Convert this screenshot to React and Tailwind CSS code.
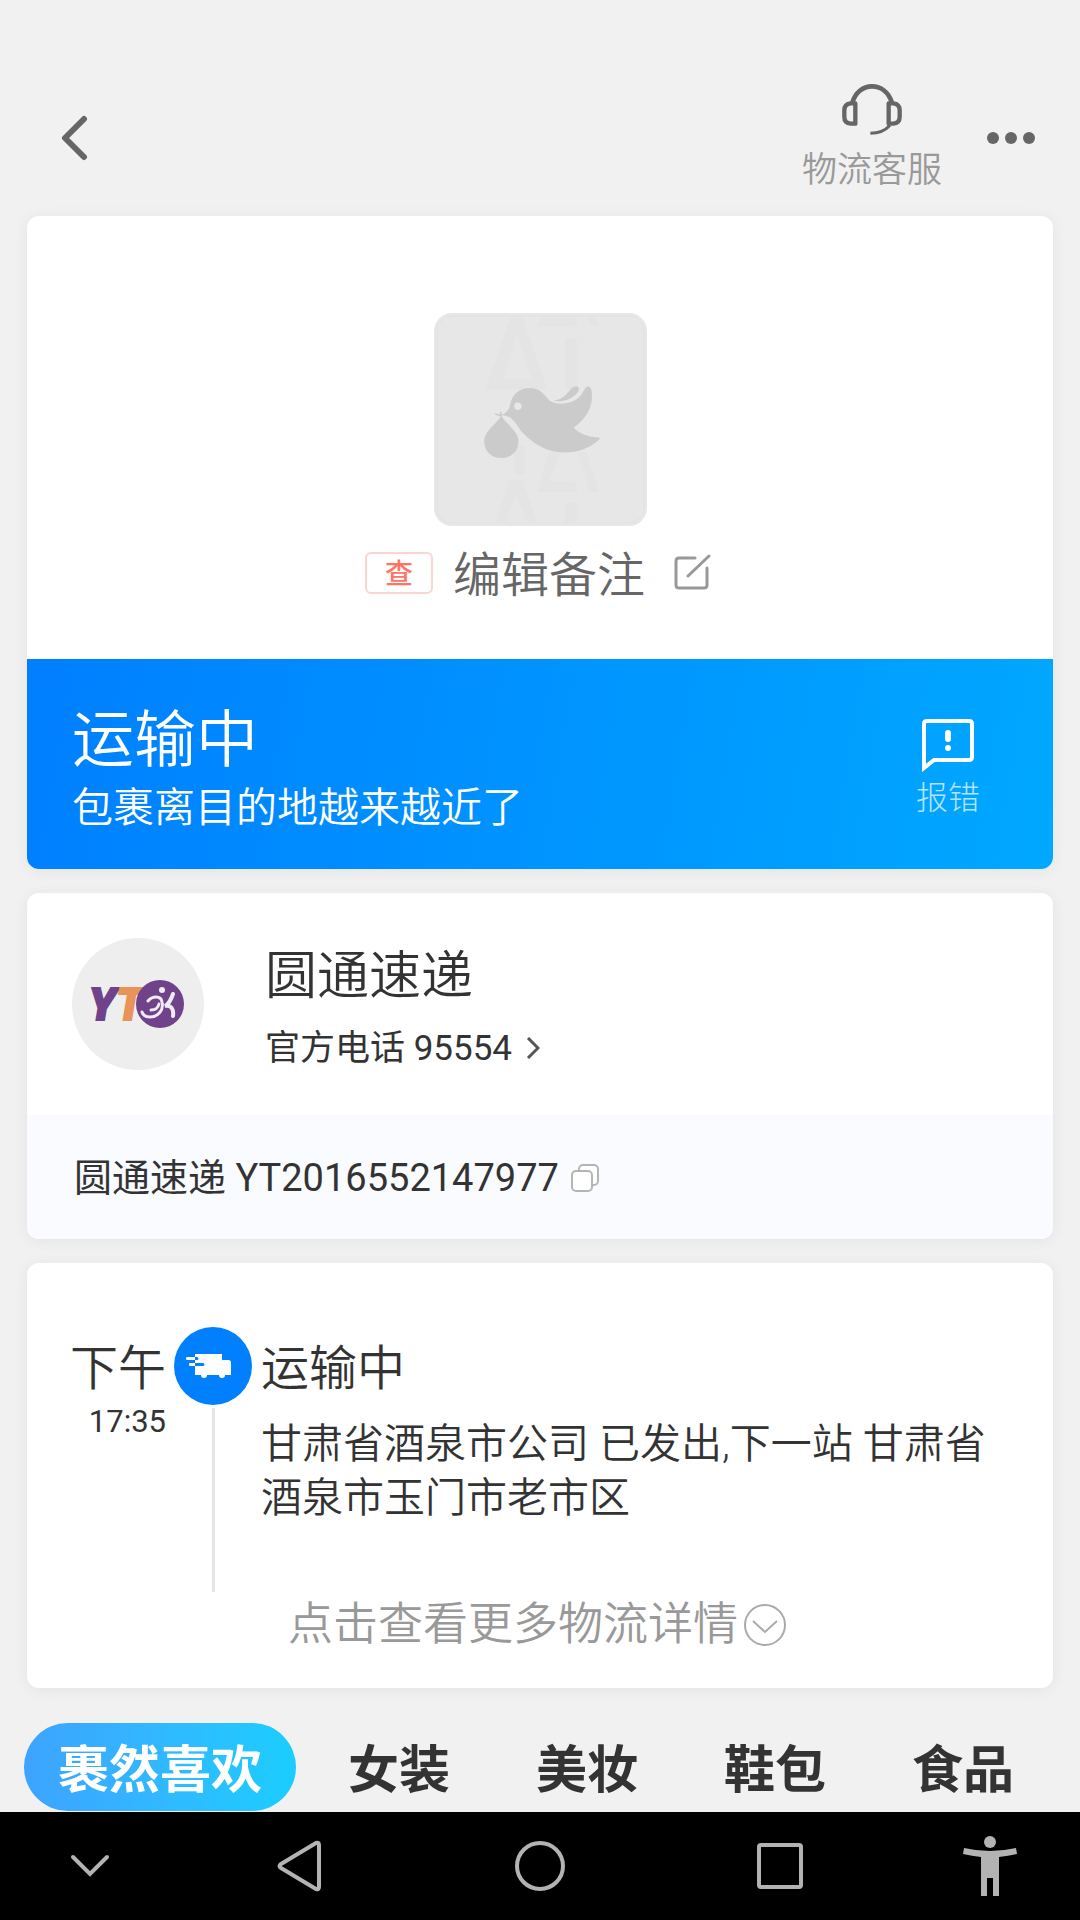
import React, { useState } from 'react';

const tabs = ['裹然喜欢', '女装', '美妆', '鞋包', '食品'];

const BackIcon = () => (
  <svg width="28" height="46" viewBox="0 0 28 46" fill="none" stroke="#666" strokeWidth="6" strokeLinecap="round" strokeLinejoin="round">
    <path d="M24 4 L5 23 L24 42" />
  </svg>
);

const HeadsetIcon = () => (
  <svg width="60" height="52" viewBox="246 72 180 156" fill="none" stroke="#666">
    <path d="M277 128 C286 98 308 79 336 79 C364 79 386 98 396 128" strokeWidth="14" />
    <path d="M286 130 H272 C260 131 253 139 253 151 V171 C253 183 260 190 272 191 H286 Z" strokeWidth="13" strokeLinejoin="round" />
    <path d="M386 130 H400 C412 131 419 139 419 151 V171 C419 183 412 190 400 191 H386 Z" strokeWidth="13" strokeLinejoin="round" />
    <path d="M390 196 C376 212 356 220 331 220" strokeWidth="9" />
  </svg>
);

const MoreIcon = () => (
  <svg width="48" height="12" viewBox="0 0 48 12" fill="#666">
    <circle cx="6" cy="6" r="6" />
    <circle cx="24" cy="6" r="6" />
    <circle cx="42" cy="6" r="6" />
  </svg>
);

// Default package picture: a dove carrying a parcel
const PackagePlaceholder = () => (
  <svg className="block w-full h-full" viewBox="40 40 640 640" aria-hidden="true">
    <g fill="#e4e4e4">
      <path d="M350 80 L364 54 H463 L472 80 Z M500 54 H524 L537 80 H512 Z" />
      <path d="M433 115 H468 V270 H433 Z M280 440 H312 V525 H280 Z M433 612 H468 V668 H433 Z" />
      <path d="M270 54 H306 L381 270 H342 L288 104 L250 238 H333 L345 270 H193 Z" />
      <path d="M386 458 H420 L386 546 H463 L472 578 H350 Z M470 458 H497 L537 578 H508 Z" />
      <path d="M268 541 H306 L350 668 H318 L286 580 L258 668 H226 Z" />
    </g>
    <rect x="49" y="49" width="622" height="622" rx="44" fill="none" stroke="#e1e1e1" strokeWidth="3" />
    <g fill="#cbcbcb">
      <path d="M243 347 C258 340 266 330 268 318 C273 285 296 265 328 265 C355 265 370 281 384 300 C398 316 443 318 470 298 C486 286 490 271 497 263 C506 257 514 265 514 280 C518 320 500 356 460 384 C476 403 505 413 536 414 C540 416 537 419 534 422 C508 445 474 459 430 459 C370 457 327 423 300 392 C284 370 276 348 243 347 Z" />
      <path d="M400 304 C430 300 443 277 456 264 C468 256 480 263 474 274 C462 295 430 309 400 304 Z" />
      <path d="M242 349 C255 372 294 394 294 426 C294 456 271 476 242 476 C213 476 191 456 191 426 C191 394 230 372 242 349 Z" />
    </g>
    <path d="M226 344 L242 349 L240 339" fill="none" stroke="#cbcbcb" strokeWidth="5" strokeLinecap="round" />
    <circle cx="292" cy="320" r="11" fill="#e7e7e7" />
  </svg>
);

const EditIcon = () => (
  <svg width="38" height="38" viewBox="0 0 38 38" fill="none" stroke="#999" strokeWidth="3" strokeLinecap="round" strokeLinejoin="round">
    <path d="M22 4 H6 Q3 4 3 7 V31 Q3 34 6 34 H31 Q34 34 34 31 V14" />
    <path d="M15 22 L36 2" />
  </svg>
);

const ReportIcon = () => (
  <svg width="52" height="53" viewBox="0 0 52 53" fill="none" stroke="#fff" strokeWidth="4">
    <path d="M2 49 V5 Q2 2 5 2 H47 Q50 2 50 5 V38 Q50 41 47 41 H12 Z" />
    <path d="M26 14 V20" strokeWidth="6" strokeLinecap="round" />
    <circle cx="26" cy="29" r="3" fill="#fff" stroke="none" />
  </svg>
);

const YtoLogo = () => (
  <svg width="100" height="64" viewBox="-4 -7 100 64">
    <text x="-3" y="41" fontFamily="Roboto" fontWeight="900" fontStyle="italic" fontSize="44" fill="#6f4289" stroke="#6f4289" strokeWidth="2">
      Y<tspan fill="#e8935a" stroke="#e8935a">T</tspan>
    </text>
    <circle cx="68" cy="25" r="24" fill="#6f4289" />
    <circle cx="70" cy="11" r="3" fill="#efeaf3" />
    <g fill="none" stroke="#efeaf3" strokeWidth="3" strokeLinecap="round">
      <path d="M56 22 C60 17 69 16 70 23 C72 31 66 38 58 38 C54 38 51 36 50 33" />
      <path d="M59 31 C63 31 66 29 67 25" />
      <path d="M81 15 C79 21 77 25 73 27 C79 26 82 30 81 37" strokeWidth="4" />
    </g>
  </svg>
);

const ArrowRight = () => (
  <svg width="14" height="24" viewBox="0 0 14 24" fill="none" stroke="#555" strokeWidth="3">
    <path d="M2 1 L12 11 L2 21" />
  </svg>
);

const CopyIcon = () => (
  <svg width="28" height="28" viewBox="0 0 28 28" fill="#fff" stroke="#b5b5b5" strokeWidth="2">
    <rect x="8" y="1" width="19" height="20" rx="4" />
    <rect x="1" y="7" width="20" height="20" rx="4" />
  </svg>
);

const TruckIcon = () => (
  <svg width="78" height="78" viewBox="0 0 234 234" fill="#fff">
    <path d="M63 81 H144 V99 H163 Q171 99 171 107 V144 H153 A9 9 0 0 1 135 144 H99 A9 9 0 0 1 81 144 H63 Z" />
    <rect x="36" y="90" width="30" height="9" rx="4" />
    <rect x="45" y="108" width="20" height="9" rx="4" />
    <path d="M63 90 H69 A4 4 0 0 1 69 99 H63 Z M63 108 H87 A4 4 0 0 1 87 117 H63 Z" fill="#007fff" />
  </svg>
);

const MoreDetailIcon = () => (
  <svg width="42" height="42" viewBox="0 0 42 42" fill="none" stroke="#aaa" strokeWidth="2">
    <circle cx="21" cy="21" r="20" />
    <path d="M9 17 L21 28 L33 17" />
  </svg>
);

const navItems = [
  {
    label: '收起',
    icon: (
      <svg width="60" height="60" viewBox="0 0 60 60" fill="none" stroke="#b3b3b3" strokeWidth="4" strokeLinecap="round">
        <path d="M13 21 L30 38 L47 21" />
      </svg>
    ),
  },
  {
    label: '返回',
    icon: (
      <svg width="60" height="60" viewBox="0 0 60 60" fill="none" stroke="#b3b3b3" strokeWidth="4" strokeLinejoin="round">
        <path d="M11 28 L46 7 Q49 6 49 9 V51 Q49 54 46 53 L11 32 Q8 30 11 28 Z" />
      </svg>
    ),
  },
  {
    label: '主页',
    icon: (
      <svg width="60" height="60" viewBox="0 0 60 60" fill="none" stroke="#b3b3b3" strokeWidth="4">
        <circle cx="30" cy="30" r="23" />
      </svg>
    ),
  },
  {
    label: '最近任务',
    icon: (
      <svg width="60" height="60" viewBox="0 0 60 60" fill="none" stroke="#b3b3b3" strokeWidth="4">
        <rect x="9" y="9" width="42" height="42" rx="2" />
      </svg>
    ),
  },
  {
    label: '无障碍',
    icon: (
      <svg width="60" height="60" viewBox="0 0 60 60" fill="#b3b3b3">
        <circle cx="30" cy="6" r="6" />
        <path d="M4 12 Q30 18 56 12 L57 18 Q48 20 39 21 V60 H33 V42 H27 V60 H21 V21 Q12 20 3 18 Z" />
      </svg>
    ),
  },
];

const Card = ({ className = '', children }) => (
  <section className={`mx-[27px] bg-white rounded-xl overflow-hidden shadow-[0_2px_16px_rgba(0,0,0,0.06)] ${className}`}>
    {children}
  </section>
);

const App = () => {
  const [activeTab, setActiveTab] = useState(tabs[0]);

  return (
    <div className="min-h-screen flex flex-col bg-[#f1f1f1] text-[#333] font-['Roboto','Noto_Sans_CJK_SC',sans-serif]">
      {/* Header */}
      <header className="flex items-start pt-[84px] pb-[18px] pl-[60px] pr-[45px]">
        <button type="button" aria-label="返回" className="mt-[31px]">
          <BackIcon />
        </button>
        <button type="button" className="ml-auto flex flex-col items-center">
          <HeadsetIcon />
          <span className="mt-2 text-[35px] leading-[54px] font-[350] text-[#999]">物流客服</span>
        </button>
        <button type="button" aria-label="更多" className="ml-[45px] mt-12">
          <MoreIcon />
        </button>
      </header>

      {/* Package and status */}
      <Card>
        <div className="flex flex-col items-center pt-[97px] pb-[51px]">
          <div className="w-[213px] h-[213px] rounded-[18px] overflow-hidden bg-[#e7e7e7]">
            <PackagePlaceholder />
          </div>
          <div className="mt-3 pr-1 flex items-center gap-5">
            <span className="w-[68px] h-[42px] rounded-md border-2 border-[#fbd5d1] text-center text-[28px] leading-[42px] font-medium text-[#ff7466]">
              查
            </span>
            <button type="button" className="flex items-center gap-7 text-[48px] leading-[64px] font-[350] text-[#666]">
              <span className="pt-1.5">编辑备注</span>
              <EditIcon />
            </button>
          </div>
        </div>
        <div className="flex items-start justify-between pt-[47px] pb-7 pl-[45px] pr-[73px] text-white bg-[linear-gradient(100deg,#007fff,#00a8ff)]">
          <div>
            <h1 className="text-[62px] leading-[70px] font-[350]">运输中</h1>
            <p className="text-[41px] leading-[65px] font-[350]">包裹离目的地越来越近了</p>
          </div>
          <button type="button" className="mt-[13px] flex flex-col items-center">
            <ReportIcon />
            <span className="mt-1.5 text-[32px] leading-[40px] font-light text-[#b3e5ff]">报错</span>
          </button>
        </div>
      </Card>

      {/* Courier */}
      <Card className="mt-6">
        <div className="flex items-start pt-[45px] pb-[30px] px-[45px]">
          <div className="w-[132px] h-[132px] rounded-full bg-[#eee] flex items-center justify-center">
            <YtoLogo />
          </div>
          <div className="ml-[61px] pt-[3px]">
            <h2 className="text-[52px] leading-[72px] font-[350]">圆通速递</h2>
            <a href="tel:95554" className="flex items-center gap-3.5 text-[35px] leading-[72px]">
              官方电话 95554
              <ArrowRight />
            </a>
          </div>
        </div>
        <div className="flex items-center gap-3 pt-[33px] pb-[31px] px-[47px] bg-[#fafbff] text-[38px] leading-[60px]">
          圆通速递 YT2016552147977
          <button type="button" aria-label="复制">
            <CopyIcon />
          </button>
        </div>
      </Card>

      {/* Timeline */}
      <Card className="mt-6 pt-16 pb-[30px]">
        <div className="flex px-[43px]">
          <div className="w-24 shrink-0 text-right">
            <div className="text-[48px] leading-[84px] font-[350]">下午</div>
            <div className="text-[31px] leading-[22px]">17:35</div>
          </div>
          <div className="ml-2 mr-[9px] shrink-0 flex flex-col items-center">
            <div className="w-[78px] h-[78px] rounded-full bg-[#007fff]">
              <TruckIcon />
            </div>
            <div className="mt-[3px] w-[3px] h-[184px] bg-[#e4e4e4]" />
          </div>
          <div className="flex-1">
            <h3 className="text-[48px] leading-[84px] font-[350]">运输中</h3>
            <p className="mt-1.5 text-[41px] leading-[54px] font-[350]">甘肃省酒泉市公司 已发出,下一站 甘肃省酒泉市玉门市老市区</p>
          </div>
        </div>
        <button type="button" className="mx-auto pr-1.5 flex items-center gap-1.5 text-[45px] leading-[66px] font-[350] text-[#999]">
          点击查看更多物流详情
          <MoreDetailIcon />
        </button>
      </Card>

      {/* Category tabs */}
      <div className="mt-[35px] flex gap-[18px] px-6 overflow-hidden">
        {tabs.map((tab) => (
          <button
            key={tab}
            type="button"
            onClick={() => setActiveTab(tab)}
            className={`shrink-0 px-[34px] pt-2 rounded-full text-[51px] leading-[80px] font-bold ${
              tab === activeTab ? 'text-white bg-linear-to-r from-[#3da3ff] to-[#1acdff]' : ''
            }`}
          >
            {tab}
          </button>
        ))}
      </div>

      {/* System navigation */}
      <nav className="mt-auto grid grid-cols-[3fr_4fr_4fr_4fr_3fr] py-6 bg-black">
        {navItems.map((item) => (
          <button key={item.label} type="button" aria-label={item.label} className="flex justify-center">
            {item.icon}
          </button>
        ))}
      </nav>
    </div>
  );
};

export default App;
